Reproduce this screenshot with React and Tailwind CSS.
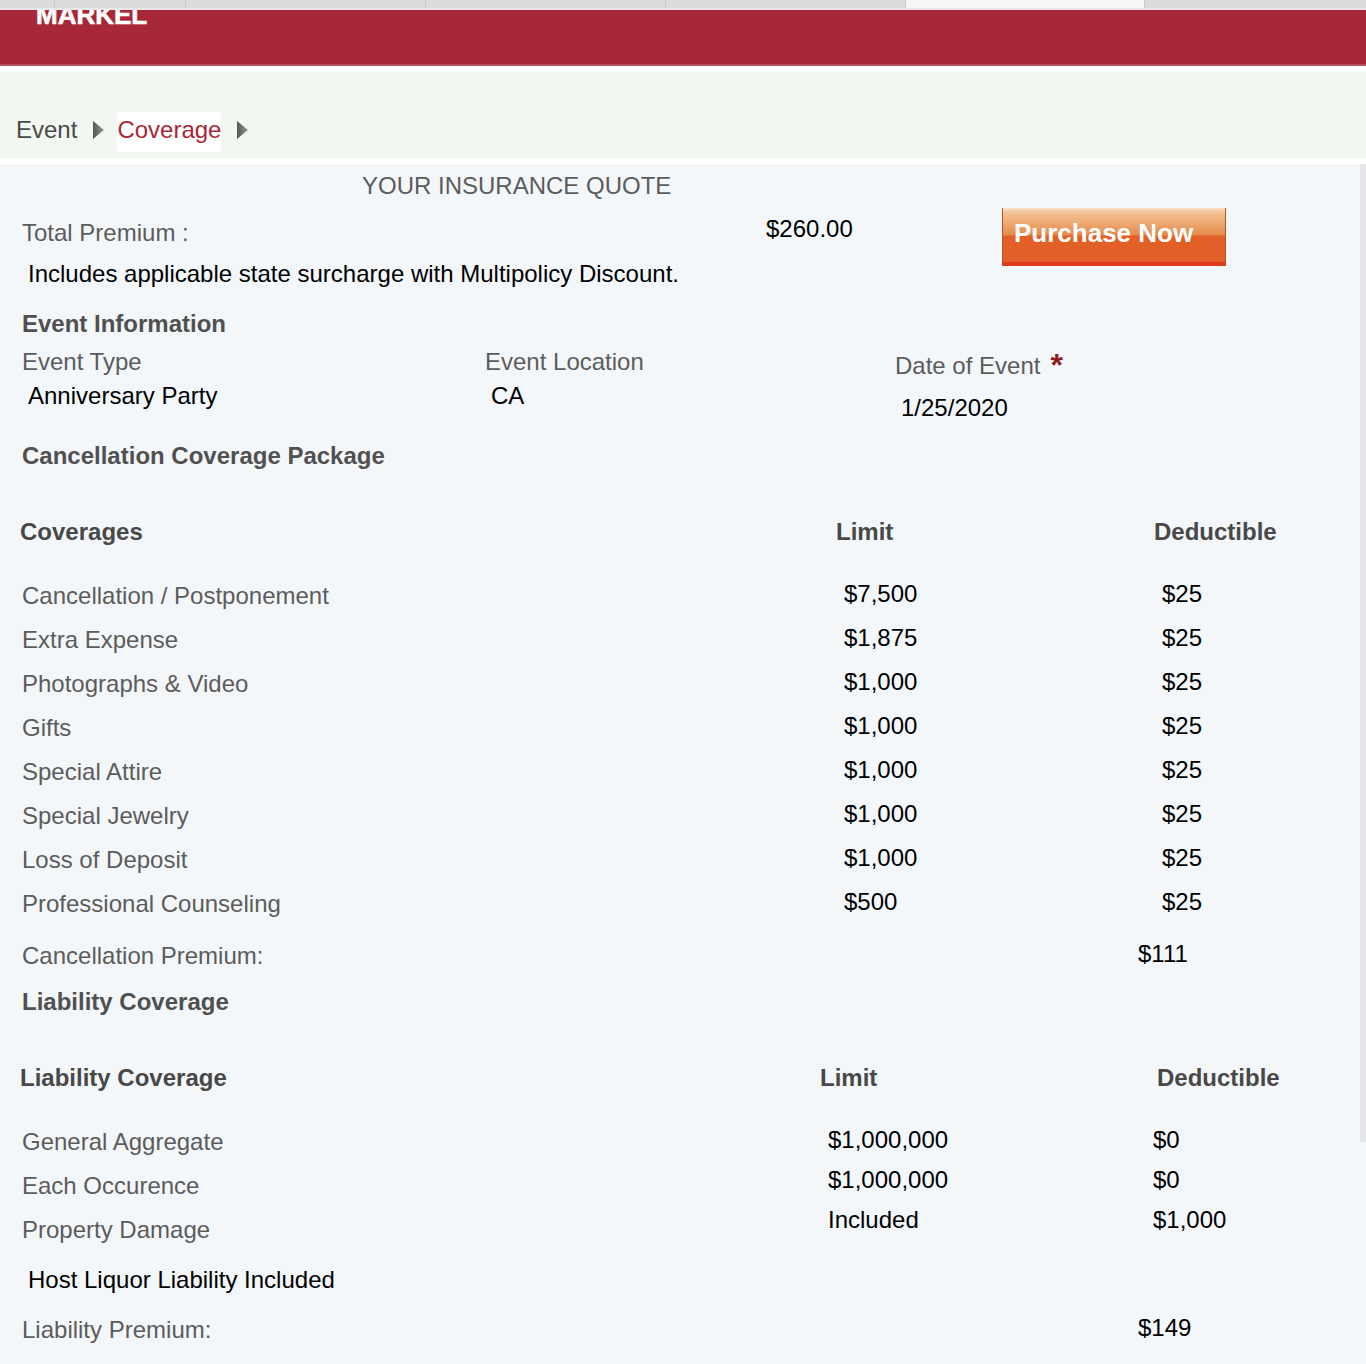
const coverages = [
    ["Cancellation / Postponement", "$7,500"],
    ["Extra Expense", "$1,875"],
    ["Photographs & Video", "$1,000"],
    ["Gifts", "$1,000"],
    ["Special Attire", "$1,000"],
    ["Special Jewelry", "$1,000"],
    ["Loss of Deposit", "$1,000"],
    ["Professional Counseling", "$500"],
];

const liability = [
    ["General Aggregate", "$1,000,000", "$0"],
    ["Each Occurence", "$1,000,000", "$0"],
    ["Property Damage", "Included", "$1,000"],
];

const tabs = ["w-[55px]", "w-[131px]", "w-[240px]", "w-[240px]", "w-[240px]"];

const Arrow = () => (
    <svg width="12" height="18" viewBox="0 0 12 18" className="shrink-0">
        <defs>
            <linearGradient id="arrowFill" x1="0" y1="0" x2="1" y2="0">
                <stop offset="0" stopColor="#555555" />
                <stop offset="1" stopColor="#9a9a9a" />
            </linearGradient>
        </defs>
        <polygon points="1,0 12,9 1,18" fill="url(#arrowFill)" />
    </svg>
);

const Heading = ({ children, className = "" }) => (
    <div className={`h-[28px] pl-[22px] text-[24px] leading-[28px] font-bold text-[#505050] ${className}`}>{children}</div>
);

const Label = ({ children, className = "" }) => (
    <div className={`h-[28px] text-[24px] leading-[28px] text-[#5c5c5c] ${className}`}>{children}</div>
);

const Value = ({ children, className = "" }) => (
    <div className={`h-[28px] text-[24px] leading-[28px] text-black ${className}`}>{children}</div>
);

const App = () => {
    return (
        <div className="h-[1364px] w-[1366px] overflow-hidden bg-white font-['Liberation_Sans',Arial,sans-serif]">
            <div className="flex h-[8px] bg-[#dcdcdc]">
                {tabs.map((w, i) => (
                    <div key={i} className={`${w} border-r border-[#c9c9c9]`} />
                ))}
                <div className="w-[238px] bg-[#f6f6f6]" />
                <div className="w-[1px] bg-[#c9c9c9]" />
            </div>
            <div className="h-[2px] bg-[#e8e8e8]" />

            <div className="h-[56px] border-b-2 border-[#b5505f] bg-[#a72839] pl-[36px]">
                <div className="flex h-[15px] items-end overflow-hidden">
                    <span className="text-[26px] leading-[19px] font-bold text-white [-webkit-text-stroke:0.6px_white]">MARKEL</span>
                </div>
            </div>

            <div className="mt-[6px] flex h-[86px] items-end bg-[#f3f7f2] pb-[6px] pl-[16px]">
                <span className="h-[40px] text-[24px] leading-[36px] text-[#4a4a4a]">Event</span>
                <span className="mb-[13px] ml-[15px]"><Arrow /></span>
                <span className="ml-[13px] h-[40px] bg-white text-[24px] leading-[36px] text-[#a72839]">Coverage</span>
                <span className="mb-[13px] ml-[15px]"><Arrow /></span>
            </div>

            <div className="mt-[6px] flex h-[1200px] bg-[#f3f7fa]">
                <div className="flex-1 pt-[8px]">
                    <Label className="pl-[362px]">YOUR INSURANCE QUOTE</Label>

                    <div className="mt-[8px] flex">
                        <div className="w-[1002px]">
                            <div className="flex h-[52px]">
                                <Label className="mt-[11px] w-[766px] pl-[22px]">Total Premium :</Label>
                                <Value className="mt-[7px]">$260.00</Value>
                            </div>
                            <Value className="pl-[28px]">Includes applicable state surcharge with Multipolicy Discount.</Value>
                        </div>
                        <div className="h-[58px] w-[224px] border-x border-[#b5561c] bg-[linear-gradient(180deg,#f9e0cb_0px,#f5c498_4px,#e48a4b_27px,#e25f28_28px,#e25f28_54px,#de3a1c_54px)] pt-[9px] pl-[11px] text-[26px] leading-[32px] font-bold text-white">
                            Purchase Now
                        </div>
                    </div>

                    <Heading className="mt-[22px]">Event Information</Heading>

                    <div className="mt-[10px] flex h-[74px]">
                        <div className="w-[485px] pl-[22px]">
                            <Label>Event Type</Label>
                            <Value className="mt-[6px] pl-[6px]">Anniversary Party</Value>
                        </div>
                        <div className="w-[410px]">
                            <Label>Event Location</Label>
                            <Value className="mt-[6px] pl-[6px]">CA</Value>
                        </div>
                        <div className="pt-[4px]">
                            <Label>
                                Date of Event
                                <span className="relative top-[2px] ml-[10px] text-[32px] leading-[0] font-bold text-[#8f1d1d]">*</span>
                            </Label>
                            <Value className="mt-[14px] pl-[6px]">1/25/2020</Value>
                        </div>
                    </div>

                    <Heading className="mt-[20px]">Cancellation Coverage Package</Heading>

                    <div className="mt-[48px] flex h-[28px] text-[24px] leading-[28px] font-bold text-[#484848]">
                        <div className="w-[836px] pl-[20px]">Coverages</div>
                        <div className="w-[318px]">Limit</div>
                        <div>Deductible</div>
                    </div>

                    <div className="mt-[34px] flex flex-col gap-[16px]">
                        {coverages.map(([name, limit]) => (
                            <div key={name} className="flex h-[28px]">
                                <Label className="mt-[2px] w-[844px] pl-[22px]">{name}</Label>
                                <Value className="w-[318px]">{limit}</Value>
                                <Value>$25</Value>
                            </div>
                        ))}
                    </div>

                    <div className="mt-[24px] flex h-[30px]">
                        <Label className="mt-[2px] w-[1138px] pl-[22px]">Cancellation Premium:</Label>
                        <Value>$111</Value>
                    </div>

                    <Heading className="mt-[18px]">Liability Coverage</Heading>

                    <div className="mt-[48px] flex h-[28px] text-[24px] leading-[28px] font-bold text-[#484848]">
                        <div className="w-[820px] pl-[20px]">Liability Coverage</div>
                        <div className="w-[337px]">Limit</div>
                        <div>Deductible</div>
                    </div>

                    <div className="mt-[34px] flex h-[116px]">
                        <div className="flex w-[828px] flex-col gap-[16px] pt-[2px] pl-[22px]">
                            {liability.map(([name]) => (
                                <Label key={name}>{name}</Label>
                            ))}
                        </div>
                        <div className="flex w-[325px] flex-col gap-[12px]">
                            {liability.map(([name, limit]) => (
                                <Value key={name}>{limit}</Value>
                            ))}
                        </div>
                        <div className="flex flex-col gap-[12px]">
                            {liability.map(([name, , ded]) => (
                                <Value key={name}>{ded}</Value>
                            ))}
                        </div>
                    </div>

                    <Value className="mt-[24px] pl-[28px]">Host Liquor Liability Included</Value>

                    <div className="mt-[20px] flex h-[30px]">
                        <Label className="mt-[2px] w-[1138px] pl-[22px]">Liability Premium:</Label>
                        <Value>$149</Value>
                    </div>
                </div>
                <div className="h-[978px] w-[6px] bg-[#e4e6ea]" />
            </div>
        </div>
    );
};

export default App;
